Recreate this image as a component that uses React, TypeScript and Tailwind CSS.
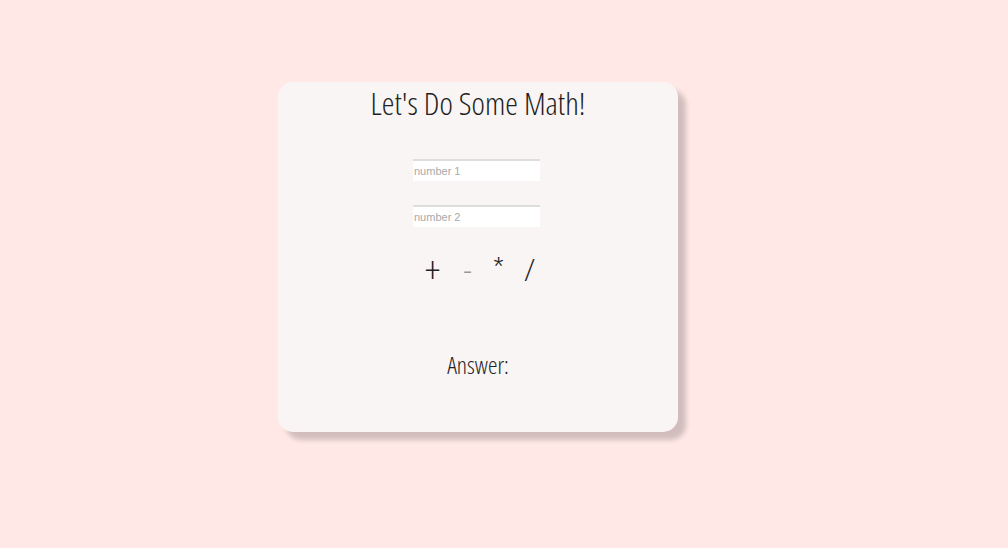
import React from "react";

export default function App() {
  return (
    <div className="w-[1008px] h-[548px] bg-[#ffe8e6] flex justify-start pl-[278px] pt-[82px]">
      <div className="w-[400px] h-[350px] bg-[#f9f5f4] rounded-[15px] shadow-[8px_8px_5px_rgba(0,0,0,0.18)] flex flex-col items-center">
        <h1 className="mt-[0px] text-[32px] leading-[42px] font-light text-[#1f1f1f] font-stretch-condensed [font-family:'Open_Sans',sans-serif]">
          Let's Do Some Math!
        </h1>
        <input
          placeholder="number 1"
          className="mt-[35px] mr-[3px] w-[127px] h-[22px] bg-white border-t-2 border-t-[#ddd] px-[1px] text-[11px] text-[#a9a9a9] outline-none placeholder:text-[#a9a9a9] [font-family:'Liberation_Sans',Arial,sans-serif]"
        />
        <input
          placeholder="number 2"
          className="mt-[24px] mr-[3px] w-[127px] h-[22px] bg-white border-t-2 border-t-[#ddd] px-[1px] text-[11px] text-[#a9a9a9] outline-none placeholder:text-[#a9a9a9] [font-family:'Liberation_Sans',Arial,sans-serif]"
        />
        <div className="mt-[22px] ml-[6px] flex items-center h-[40px] text-[32px] leading-[40px] font-light text-[#222] [font-family:'Open_Sans',sans-serif] font-stretch-condensed">
          <span className="w-[18px] text-center text-[38px] leading-[40px] font-extralight">+</span>
          <span className="ml-[17px] w-[18px] text-center text-[#999]">-</span>
          <span className="ml-[13px] w-[18px] text-center">*</span>
          <span className="ml-[13px] w-[18px] text-center">/</span>
        </div>
        <div className="mt-[60px] text-[24px] leading-[32px] font-light text-[#1f1f1f] font-stretch-condensed [font-family:'Open_Sans',sans-serif]">
          Answer:
        </div>
      </div>
    </div>
  );
}
